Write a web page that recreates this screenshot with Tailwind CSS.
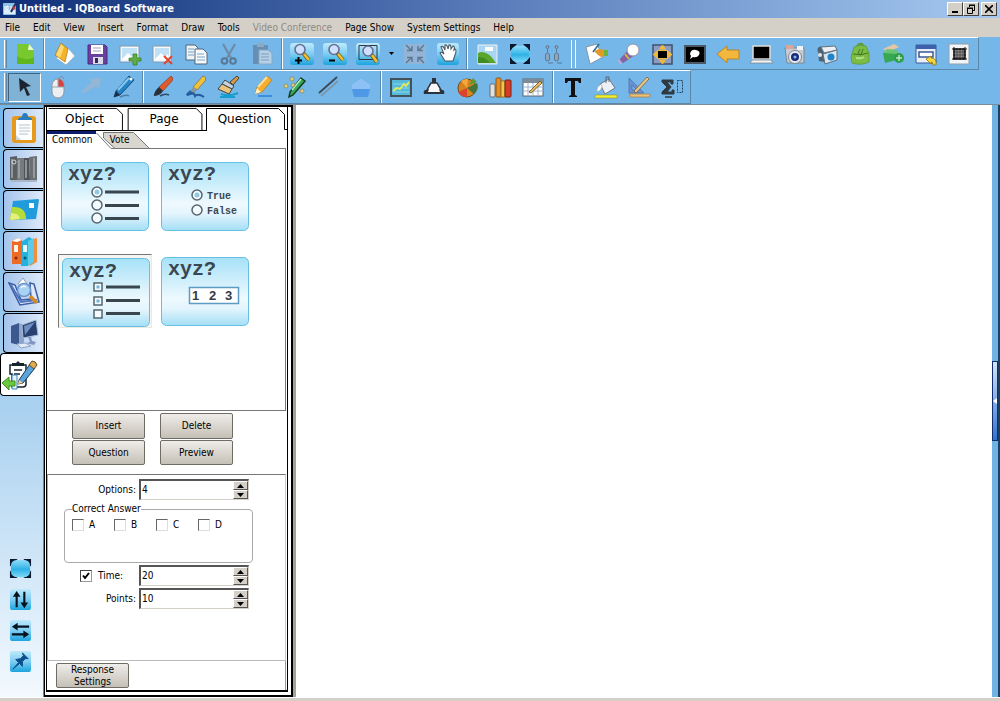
<!DOCTYPE html>
<html lang="en">
<head>
  <meta charset="UTF-8" />
  <meta name="viewport" content="width=device-width, initial-scale=1.0" />
  <title>Untitled - IQBoard Software</title>
  <script src="https://cdn.jsdelivr.net/npm/@tailwindcss/browser@4"></script>
</head>
<body class="h-screen flex flex-col overflow-hidden bg-[#74b7e8] text-black text-[10px] leading-3 font-['DejaVu_Sans_Condensed','DejaVu_Sans',sans-serif]">

  <!-- shared gradients -->
  <svg class="absolute w-0 h-0" aria-hidden="true">
    <defs>
      <linearGradient id="glass" x1="0" y1="0" x2="0" y2="1"><stop offset="0" stop-color="#bdeafc"/><stop offset=".5" stop-color="#7fcdf2"/><stop offset="1" stop-color="#1ba4de"/></linearGradient>
      <linearGradient id="ball" x1="0" y1="0" x2="0" y2="1"><stop offset="0" stop-color="#8fdcf8"/><stop offset=".55" stop-color="#2fb2e8"/><stop offset="1" stop-color="#7fd8f6"/></linearGradient>
      <linearGradient id="card" x1="0" y1="0" x2="0" y2="1"><stop offset="0" stop-color="#a6e1f8"/><stop offset=".6" stop-color="#eef9fe"/><stop offset=".75" stop-color="#e4f5fd"/><stop offset="1" stop-color="#a4def6"/></linearGradient>
    </defs>
  </svg>

  <header class="h-[18px] shrink-0 flex items-center pl-[3px] pr-[3px] bg-linear-to-r from-[#0f2e78] via-[#5b7dbb] to-[#a6caf0]">
    <svg class="size-[14px]" viewBox="0 0 14 14"><rect y="1" width="13" height="12" rx="1" fill="#8fc0e6"/><rect x="1" y="8" width="11" height="4" fill="#dbeefa"/><path d="M2 4v4M5 4a2 2 0 1 0 0 4V4M8 4v4" stroke="#fff" fill="none"/><path d="M8 10l5-9" stroke="#222b55" stroke-width="2"/><circle cx="11" cy="6" r="1.5" fill="#d33"/></svg>
    <h1 class="ml-[2px] text-[11px] font-bold text-white whitespace-nowrap">Untitled - IQBoard Software</h1>
    <div class="ml-auto flex">
      <button aria-label="Minimize" class="w-4 h-[14px] bg-[#d4d0c8] border border-t-white border-l-white border-r-[#404040] border-b-[#404040] flex items-end justify-center pb-[2px]"><span class="w-[6px] h-[2px] bg-black"></span></button>
      <button aria-label="Restore" class="w-4 h-[14px] bg-[#d4d0c8] border border-t-white border-l-white border-r-[#404040] border-b-[#404040] flex items-center justify-center"><svg class="size-[10px]" viewBox="0 0 10 10" fill="none" stroke="#000"><path d="M3 1h6M3 1.500h6M3.500 3V1M8.500 1v5.500H7M1 4h6M1 4.500h6M1.500 4v5.500h5V4"/></svg></button>
      <button aria-label="Close" class="ml-[2px] w-4 h-[14px] bg-[#d4d0c8] border border-t-white border-l-white border-r-[#404040] border-b-[#404040] flex items-center justify-center"><svg class="size-2" viewBox="0 0 8 8"><path d="M0 0l8 8M8 0L0 8" stroke="#000" stroke-width="1.600"/></svg></button>
    </div>
  </header>

  <nav class="h-[19px] shrink-0 flex items-center gap-[13px] pl-[5px] bg-[#d4d0c8] whitespace-nowrap">
    <button>File</button>
    <button>Edit</button>
    <button>View</button>
    <button>Insert</button>
    <button>Format</button>
    <button>Draw</button>
    <button>Tools</button>
    <button disabled class="text-[#8d8a84]">Video Conference</button>
    <button>Page Show</button>
    <button>System Settings</button>
    <button>Help</button>
  </nav>

  <!-- standard toolbar -->
  <div class="h-[33px] w-[979px] shrink-0 flex items-center border-t border-t-white border-b border-b-[#5b87a8] border-r border-r-[#5b87a8] pl-1">
    <span class="w-[3px] h-7 mr-px border-l border-l-white border-r border-r-[#5b87a8]"></span>
    <button aria-label="New" class="w-[33px] flex justify-center"><svg class="size-6" viewBox="0 0 24 24"><path d="M4 2h12l5 6v14H4z" fill="#79c92e"/><path d="M16 2l5 6h-6z" fill="#e9f7d8"/><path d="M4 14q9 6 17 1v7H4z" fill="#5fb61e"/></svg></button>
    <span class="w-[2px] h-full mx-[2px] border-l border-l-[#5b87a8] border-r border-r-white"></span>
    <button aria-label="Open" class="w-[33px] flex justify-center"><svg class="size-6" viewBox="0 0 24 24"><path d="M4 16l12-10 7 8-9 9z" fill="#fff" stroke="#8c9cab" stroke-width=".6"/><path d="M9 1l7 6-3 13-10-7z" fill="#f5b428" stroke="#a9771a" stroke-width=".7"/><path d="M9 2l3 3-4 11-4-3z" fill="#fbd975"/></svg></button>
    <button aria-label="Save" class="w-[33px] flex justify-center"><svg class="size-6" viewBox="0 0 24 24"><path d="M3 3h17l2 2v17H3z" fill="#6a3fa0" stroke="#4b2a7c"/><path d="M6 3h12v9H6z" fill="#fff"/><path d="M8 6h8M8 9h8" stroke="#a99bc2"/><path d="M8 15h10v7H8z" fill="#dcdce6"/><path d="M10 16h3v5h-3z" fill="#3b2466"/></svg></button>
    <button aria-label="Insert picture" class="w-[33px] flex justify-center"><svg class="size-6" viewBox="0 0 24 24"><path d="M2 4h19v16H2z" fill="#f4f8fb" stroke="#7d99ad"/><path d="M4 6h15v11H4z" fill="#bfe0f5"/><path d="M4 17l6-6 4 4 3-3 2 5z" fill="#fff"/><path d="M15 12h4v4h4v3h-4v4h-4v-4h-4v-3h4z" fill="#5fae43" stroke="#2f7a24" stroke-width=".7"/></svg></button>
    <button aria-label="Delete picture" class="w-[33px] flex justify-center"><svg class="size-6" viewBox="0 0 24 24"><path d="M2 4h18v16H2z" fill="#f4f8fb" stroke="#7d99ad"/><path d="M4 6h14v11H4z" fill="#bfe0f5"/><path d="M4 17l6-6 4 4 3-3 1 5z" fill="#fff"/><path d="M13 14l8 8M21 14l-8 8" stroke="#e2452c" stroke-width="2"/></svg></button>
    <button aria-label="Copy" class="w-[33px] flex justify-center"><svg class="size-6" viewBox="0 0 24 24"><path d="M2 3h9l3 3v12H2z" fill="#eef3f7" stroke="#51677a"/><path d="M4 7h6M4 10h6M4 13h6" stroke="#7ba2c6"/><path d="M11 7h8l4 4v11H11z" fill="#f6f9fb" stroke="#51677a"/><path d="M13 12h7M13 15h8M13 18h8" stroke="#7ba2c6"/></svg></button>
    <button aria-label="Cut" class="w-[33px] flex justify-center"><svg class="size-6" viewBox="0 0 24 24" fill="none"><path d="M6 2l8 14M18 2l-8 14" stroke="#6d8ba8" stroke-width="2.200"/><circle cx="7.500" cy="19" r="2.800" stroke="#587896" stroke-width="2"/><circle cx="16" cy="19" r="2.800" stroke="#587896" stroke-width="2"/></svg></button>
    <button aria-label="Paste" class="w-[33px] flex justify-center"><svg class="size-6" viewBox="0 0 24 24"><rect x="3" y="3" width="15" height="19" fill="#668fb3"/><rect x="7" y="1" width="7" height="4" fill="#8aa9c4"/><path d="M9 8h9l4 3v11H9z" fill="#b6d0e6" stroke="#87a8c6"/><path d="M11 12h8M11 15h8M11 18h8" stroke="#7c9fc0"/></svg></button>
    <span class="w-[2px] h-full ml-[3px] mr-[2px] border-l border-l-[#5b87a8] border-r border-r-white"></span>
    <button aria-label="Zoom in" class="w-[33px] flex justify-center"><svg class="size-6" viewBox="0 0 24 24"><rect x="0" y="1" width="24" height="22" rx="3" fill="url(#glass)"/><path d="M13 11l6 7" stroke="#7a5a10" stroke-width="4"/><path d="M14 12l5 6" stroke="#f0c030" stroke-width="2.500"/><circle cx="10" cy="7.500" r="5" fill="#cfe0ff" stroke="#656f92" stroke-width="1.600"/><path d="M5 18.500h7M8.500 15v7" stroke="#000" stroke-width="2"/></svg></button>
    <button aria-label="Zoom out" class="w-[33px] flex justify-center"><svg class="size-6" viewBox="0 0 24 24"><rect x="0" y="1" width="24" height="22" rx="3" fill="url(#glass)"/><path d="M14 11l6 7" stroke="#7a5a10" stroke-width="4"/><path d="M15 12l5 6" stroke="#f0c030" stroke-width="2.500"/><circle cx="11" cy="7.500" r="5" fill="#cfe0ff" stroke="#656f92" stroke-width="1.600"/><path d="M6 18.500h6" stroke="#000" stroke-width="2"/></svg></button>
    <button aria-label="Zoom region" class="w-[33px] flex justify-center"><svg class="size-6" viewBox="0 0 24 24"><rect x="0" y="1" width="24" height="22" rx="3" fill="url(#glass)"/><path d="M3 3.500h18v14H3z" fill="none" stroke="#334"/><path d="M15 12l6 8" stroke="#7a5a10" stroke-width="4"/><path d="M16 13l5 7" stroke="#f0c030" stroke-width="2.500"/><circle cx="12" cy="9" r="5" fill="#cfe0ff" stroke="#656f92" stroke-width="1.600"/></svg></button>
    <button aria-label="Zoom options" class="w-[14px] flex justify-center"><svg class="w-[5px] h-[3px]" viewBox="0 0 5 3"><path d="M0 0h5L2.500 3z"/></svg></button>
    <button aria-label="Fit" class="w-[33px] flex justify-center"><svg class="size-6" viewBox="0 0 24 24"><rect x="1" y="2" width="22" height="20" rx="3" fill="#93b4d6"/><path d="M3 3l5 5M21 3l-5 5M3 21l5-5M21 21l-5-5M4 8.500h5V4M20 8.500h-5V4M4 15.500h5V20M20 15.500h-5V20" fill="none" stroke="#5e7893" stroke-width="1.500"/></svg></button>
    <button aria-label="Pan" class="w-[33px] flex justify-center"><svg class="size-6" viewBox="0 0 24 24"><rect x="1" y="1" width="22" height="22" rx="3" fill="url(#glass)"/><path d="M9 19l-5-8q1-2 4 1L5 5q2-2 4 3V3q2-1 3 4l1-4q2-1 2 4l2-3q2 0 1 4l1-1q2 1 0 6l-2 6z" fill="#fff" stroke="#4d5964" stroke-width="1.100"/></svg></button>
    <span class="w-[2px] h-full mx-[2px] border-l border-l-[#5b87a8] border-r border-r-white"></span>
    <button aria-label="Background" class="w-[33px] flex justify-center"><svg class="size-6" viewBox="0 0 24 24"><path d="M3 3h19v19H3z" fill="#a8d6f2" stroke="#eee"/><path d="M3 11q9-4 18 10H3z" fill="#5ba62a"/><path d="M3 15q8 0 12 6H3z" fill="#3f8d20"/><path d="M10 5h8v4h-8z" fill="#fff"/></svg></button>
    <button aria-label="Full screen" class="w-[33px] flex justify-center"><svg class="size-6" viewBox="0 0 24 24"><path d="M2 2h7L2 9zM22 2v7l-7-7zM2 22v-7l7 7zM22 22h-7l7-7z" fill="#0c1830"/><rect x="3" y="4" width="18" height="16" rx="6" fill="url(#ball)"/></svg></button>
    <button aria-label="Dual users" class="w-[33px] flex justify-center"><svg class="size-6" viewBox="0 0 24 24" fill="#8fa6bd" stroke="#5d7892"><circle cx="6.500" cy="5" r="1.500"/><rect x="4.500" y="11" width="4" height="8" rx="2"/><circle cx="15.500" cy="5" r="1.500"/><rect x="13.500" y="11" width="4" height="8" rx="2"/><path d="M6.500 7v3M15.500 7v3M7 21h5M16 21h5" fill="none"/></svg></button>
    <span class="w-[5px] h-7 ml-[2px] mr-[3px] border-x border-x-white"></span>
    <button aria-label="Page note" class="w-[33px] flex justify-center"><svg class="size-6" viewBox="0 0 24 24"><path d="M2 5l11-3 6 13-13 7z" fill="#fff" stroke="#8796a4"/><path d="M15 2l-6 8" stroke="#246b9c" stroke-width="1.500"/><path d="M10 9l5-2 8 1v5l-6 2-3-2z" fill="#e0992a"/><path d="M20 8h4v6h-4z" fill="#69b53c"/></svg></button>
    <button aria-label="Spotlight" class="w-[33px] flex justify-center"><svg class="size-6" viewBox="0 0 24 24"><path d="M2 18l10-11 6 6-12 8z" fill="#8064a8"/><path d="M8 12l4 5" stroke="#d8b24a" stroke-width="2"/><ellipse cx="16" cy="8" rx="6" ry="6" fill="#fff" stroke="#9a91a8"/><path d="M1 17q3 0 4 5l-3 0z" fill="#bda8d4"/></svg></button>
    <button aria-label="Screen shade" class="w-[33px] flex justify-center"><svg class="size-6" viewBox="0 0 24 24"><rect x="3" y="3" width="19" height="19" fill="#8c9cc0" stroke="#40506b" stroke-width="1.500"/><path d="M12.500 3l3 4h-6zM12.500 22l3-4h-6zM3 12.500l4-3v6zM22 12.500l-4-3v6z" fill="#efb93b" stroke="#efb93b"/><rect x="7" y="8" width="11" height="9" fill="#efb93b"/><rect x="8" y="9" width="9" height="7"/></svg></button>
    <button aria-label="Screen note" class="w-[33px] flex justify-center"><svg class="size-6" viewBox="0 0 24 24"><rect x="2" y="4" width="20" height="17" stroke="#4b5866" stroke-width="2"/><path d="M7 12q1-5 6-4 5 1 3 5-2 3-6 2l-3 2 1-3z" fill="#fff"/></svg></button>
    <button aria-label="Back" class="w-[33px] flex justify-center"><svg class="size-6" viewBox="0 0 24 24"><path d="M1 12L11 4v4h12v9H11v4z" fill="#f2b73c" stroke="#b6852f"/></svg></button>
    <button aria-label="Desktop" class="w-[33px] flex justify-center"><svg class="size-6" viewBox="0 0 24 24"><path d="M4 4h17v13H4z" stroke="#ddd" stroke-width="1.500"/><path d="M3 18h19l2 3H1z" fill="#f3f3f3" stroke="#7b858e" stroke-width=".8"/></svg></button>
    <button aria-label="Camera" class="w-[33px] flex justify-center"><svg class="size-6" viewBox="0 0 24 24"><path d="M3 6h19v15H5z" fill="#c7ccd4" stroke="#7e8792"/><path d="M4 3h7l1 4H4z" fill="#dba79c"/><rect x="15" y="4" width="6" height="4" fill="#f0f2f4"/><circle cx="13" cy="15" r="6.500" fill="#e7ebef" stroke="#7c8795"/><circle cx="13" cy="15" r="4" fill="#1a2d78"/><circle cx="13" cy="15" r="1.500" fill="#8db3e8"/></svg></button>
    <button aria-label="Video" class="w-[33px] flex justify-center"><svg class="size-6" viewBox="0 0 24 24"><circle cx="6" cy="8" r="3.500" fill="#516275"/><path d="M6 5l14-1 2 4-13 3z" fill="#eef1f4" stroke="#60707e"/><path d="M3 11l12 0v10l-11-2z" fill="#4e6274"/><path d="M8 12l14-4v10l-12 4z" fill="#d9e5ef" stroke="#60707e"/><circle cx="16" cy="15" r="3.500" fill="#1e84cc"/><circle cx="5" cy="13" r="2" fill="#dce4ea"/></svg></button>
    <button aria-label="Toolkit" class="w-[33px] flex justify-center"><svg class="size-6" viewBox="0 0 24 24"><path d="M9 5q1-4 5-3l3 4" fill="none" stroke="#5d9b36" stroke-width="2"/><path d="M6 5q6-3 12-1l3 7v9q-8 4-17 1l-1-6z" fill="#7cbc45" stroke="#5d9b36" stroke-width=".8"/><path d="M5 12q8 2 15-1M12 7l-2 4 3 2 2-6" fill="none" stroke="#3f7a20"/><path d="M8 16q5 1 8-1" stroke="#b2e384" stroke-width="2" fill="none"/></svg></button>
    <button aria-label="Resources" class="w-[33px] flex justify-center"><svg class="size-6" viewBox="0 0 24 24"><path d="M2 7l11-5 5 3-11 5z" fill="#e3c7a5"/><path d="M2 11h15l2 6-15 4z" fill="#37a852"/><path d="M2 11l4-4 11 1v4z" fill="#69c476"/><circle cx="18" cy="16" r="5" fill="#2f9e48"/><path d="M18 13v6M15 16h6" stroke="#bde8c4" stroke-width="1.500"/></svg></button>
    <button aria-label="Switch window" class="w-[33px] flex justify-center"><svg class="size-6" viewBox="0 0 24 24"><path d="M2 3h20v18H2z" fill="#e9eef6" stroke="#3a5a9c"/><path d="M2 3h20v4H2z" fill="#3d62ab"/><path d="M5 10h14v5H5z" fill="#fff" stroke="#3a5a9c" stroke-width="1.500"/><path d="M12 17l5-3v2q6 0 5 7h-3q0-3-2-3v2z" fill="#f4d53a" stroke="#8f7613" stroke-width=".8"/></svg></button>
    <button aria-label="Select region" class="w-[33px] flex justify-center"><svg class="size-6" viewBox="0 0 24 24"><rect x="2" y="2" width="20" height="20" fill="#f2f4f6" stroke="#8fa0b0"/><rect x="7" y="7" width="11" height="10" fill="#8d8d8d" stroke="#111" stroke-width="1.500"/><path d="M5 7h15M5 17h15M7 5v14M18 5v14" stroke="#111" stroke-dasharray="2 1.500"/><path d="M8 10h9M8 13h9M8 15.500h9M10 8v8M13 8v8M16 8v8" stroke="#444" stroke-width=".8"/></svg></button>
  </div>

  <!-- drawing toolbar -->
  <div class="h-[34px] w-[691px] shrink-0 flex items-center border-t border-t-white border-b border-b-[#5b87a8] border-r border-r-[#5b87a8] pl-1">
    <span class="w-[3px] h-7 mr-px border-l border-l-white border-r border-r-[#5b87a8]"></span>
    <button aria-label="Select" aria-pressed="true" class="w-[33px] h-[29px] flex items-center justify-center bg-[#80b2d6] border border-t-[#3f6280] border-l-[#3f6280] border-b-white border-r-white"><svg class="size-6" viewBox="0 0 24 24"><path d="M6 3l12 8-5 1 4 8-3 1-3-8-4 4z" fill="#1d2430"/></svg></button>
    <button aria-label="Mouse" class="w-[33px] flex justify-center"><svg class="size-6" viewBox="0 0 24 24"><path d="M12 4q4-5 6 0" fill="none" stroke="#7b8fa6"/><rect x="6" y="4" width="12" height="19" rx="6" fill="#eceef2" stroke="#8d95a4"/><path d="M12 4q6 0 6 8h-6z" fill="#d8433f"/><path d="M6 12h12M12 4v8" stroke="#9aa"/></svg></button>
    <button aria-label="Laser" class="w-[33px] flex justify-center"><svg class="size-6" viewBox="0 0 24 24"><path d="M2 17L13 7l-3-3 12-1-2 11-3-3L5 18z" fill="#94b6d4"/></svg></button>
    <button aria-label="Pen" class="w-[33px] flex justify-center"><svg class="size-6" viewBox="0 0 24 24"><path d="M2 22l2-6L17 1l5 4L8 20z" fill="#2583c8" stroke="#1b4a77"/><path d="M6 15L17 3" stroke="#86cbf1" stroke-width="2"/><path d="M2 22l2-6 4 4z" fill="#1c2f45"/><path d="M8 22q6-3 9-1" fill="none" stroke="#4f7ea4" stroke-width="1.500"/><circle cx="19" cy="4" r="1.500" fill="#fff"/></svg></button>
    <span class="w-[2px] h-full mx-[2px] border-l border-l-[#5b87a8] border-r border-r-white"></span>
    <button aria-label="Brush" class="w-[33px] flex justify-center"><svg class="size-6" viewBox="0 0 24 24"><path d="M20 1q3 2 1 5l-9 10-4-4z" fill="#df5b2e" stroke="#8f3820" stroke-width=".7"/><path d="M8 12l4 4q-2 4-8 5-2 0-1-1 1-5 5-8z" fill="#2b3037"/><path d="M9 21q5-3 9-1" fill="none" stroke="#2f4b66" stroke-width="1.500"/></svg></button>
    <button aria-label="Paint brush" class="w-[33px] flex justify-center"><svg class="size-6" viewBox="0 0 24 24"><path d="M19 1q4 1 2 5l-8 9-4-3z" fill="#f0c23a" stroke="#80683a" stroke-width=".7"/><path d="M9 12l4 3-3 4-4-2z" fill="#8796a4"/><path d="M6 15l4 4-7 2-1-2z" fill="#2c66a7"/><path d="M3 20q7-4 8 1 3-3 9 1" fill="none" stroke="#245a9a" stroke-width="2"/></svg></button>
    <button aria-label="Wide brush" class="w-[33px] flex justify-center"><svg class="size-6" viewBox="0 0 24 24"><path d="M20 1l2 2-6 7-3-3z" fill="#d89a45" stroke="#4d4130"/><path d="M8 5l9 6-2 3-10-5z" fill="#c8d2da" stroke="#2b4a58"/><path d="M5 9l10 5-3 5-11-5z" fill="#e8c682" stroke="#4d4130"/><path d="M4 19q8 3 17-1M3 22h15" fill="none" stroke="#169ed0" stroke-width="2"/></svg></button>
    <button aria-label="Highlighter" class="w-[33px] flex justify-center"><svg class="size-6" viewBox="0 0 24 24"><path d="M5 19l2-7L17 1l5 4-10 12z" fill="#f5ae2e" stroke="#b27a21" stroke-width=".7"/><path d="M8 12L17 2" stroke="#fde09a" stroke-width="2"/><path d="M5 19l2-6 4 4z" fill="#fff0c8"/><path d="M8 21h14" stroke="#3c8fde" stroke-width="2"/></svg></button>
    <button aria-label="Magic pen" class="w-[33px] flex justify-center"><svg class="size-6" viewBox="0 0 24 24"><path d="M6 22l1-5L18 3l4 3L10 20z" fill="#3aa856" stroke="#153f25" stroke-width="1.500"/><path d="M9 15L18 4" stroke="#b3f0bd" stroke-width="1.500"/><g fill="#e0d07c" stroke="#857842" stroke-width=".6"><circle cx="3" cy="11" r="2"/><circle cx="9" cy="4" r="2"/><circle cx="10" cy="10" r="1.800"/><circle cx="19" cy="16" r="2"/></g></svg></button>
    <button aria-label="Line" class="w-[33px] flex justify-center"><svg class="size-6" viewBox="0 0 24 24"><path d="M3 18L21 2" stroke="#3c4a55" stroke-width="1.800"/><path d="M5 21L22 6" stroke="#7e8f9c" stroke-width="1.600"/></svg></button>
    <button aria-label="Shape" class="w-[33px] flex justify-center"><svg class="size-6" viewBox="0 0 24 24"><path d="M12 3l10 7-3 12H5L2 10z" fill="#4f98e6"/><path d="M12 3l10 7-1 4H3l-1-4z" fill="#8dc0f4"/></svg></button>
    <span class="w-[2px] h-full ml-[3px] mr-[2px] border-l border-l-[#5b87a8] border-r border-r-white"></span>
    <button aria-label="Function graph" class="w-[33px] flex justify-center"><svg class="size-6" viewBox="0 0 24 24"><rect x="2" y="4" width="20" height="17" fill="#57b9d9" stroke="#43515a" stroke-width="2"/><path d="M4 9h16M4 13h16M4 17h16" stroke="#88d7e8"/><path d="M4 16l4-3 3 1 4-5 2 2 3-4" fill="none" stroke="#e3ee57" stroke-width="1.800"/></svg></button>
    <button aria-label="Solid" class="w-[33px] flex justify-center"><svg class="size-6" viewBox="0 0 24 24"><path d="M10 3h4v5h-4z" fill="#2a333b"/><path d="M9 8h6l4 7H5z" fill="#f8f8f8" stroke="#2a333b" stroke-width="1.500"/><path d="M3 15h18q2 1 1 4H2q-1-3 1-4z" fill="#2a333b"/><path d="M7 14h10l1 3H6z" fill="#f8f8f8"/></svg></button>
    <button aria-label="Pie chart" class="w-[33px] flex justify-center"><svg class="size-6" viewBox="0 0 24 24"><circle cx="12" cy="13" r="9" fill="#d8831d" stroke="#6c4a16"/><path d="M12 13l-6-7a9 9 0 0 1 7-2z" fill="#f2a83a"/><path d="M12 13L22 8a9 9 0 0 1-3 11z" fill="#467436"/><path d="M12 13l-9 4a9 9 0 0 0 9 5z" fill="#d9442a"/><path d="M14 10l4-7 4 4z" fill="#5a9a35"/></svg></button>
    <button aria-label="Bar chart" class="w-[33px] flex justify-center"><svg class="size-6" viewBox="0 0 24 24"><rect x="2" y="9" width="5" height="13" rx="1" fill="#e4e1dc" stroke="#6b6b70"/><rect x="8" y="3" width="5" height="19" rx="1" fill="#e98c22" stroke="#8f5716"/><rect x="13" y="6" width="4" height="16" fill="#f3c744" stroke="#987523"/><rect x="17" y="5" width="6" height="17" rx="1" fill="#d53d27" stroke="#7d2318"/></svg></button>
    <button aria-label="Table" class="w-[33px] flex justify-center"><svg class="size-6" viewBox="0 0 24 24"><rect x="2" y="4" width="20" height="17" fill="#fff" stroke="#5b6670"/><path d="M2 4h20v4H2z" fill="#7d8a97"/><path d="M2 12h20M2 16h20M7 8v13M12 8v13M17 8v13" stroke="#9fb4cc"/><path d="M8 17L19 6l2 2-11 10z" fill="#e5bb5e" stroke="#5f4c25" stroke-width=".8"/></svg></button>
    <span class="w-[2px] h-full ml-[3px] mr-[2px] border-l border-l-[#5b87a8] border-r border-r-white"></span>
    <button aria-label="Text" class="w-[33px] flex justify-center"><svg class="size-6" viewBox="0 0 24 24"><path d="M4 3h16v5h-2l-1-2h-3v14l2 1v1H8v-1l2-1V6H7L6 8H4z" fill="#111"/></svg></button>
    <button aria-label="Fill" class="w-[33px] flex justify-center"><svg class="size-6" viewBox="0 0 24 24"><path d="M6 9l9-5 6 9-10 6z" fill="#edf1f5" stroke="#6b7884"/><path d="M7 9q-5 3-4 8 4-1 5-5z" fill="#fff" stroke="#8fa4b4" stroke-width=".6"/><path d="M12 8V2h3v5" fill="none" stroke="#59646e"/><path d="M1 20h22v3H1z" fill="#f1ef2e" stroke="#8d9131" stroke-width=".6"/></svg></button>
    <button aria-label="Drawing tools" class="w-[33px] flex justify-center"><svg class="size-6" viewBox="0 0 24 24"><path d="M2 3l15 15H2zM5 10v5h5z" fill="#6b8fd0" fill-rule="evenodd" stroke="#4563a0" stroke-width=".6"/><path d="M7 16L20 2l2 2L9 18z" fill="#e9c68a" stroke="#77603c" stroke-width=".8"/><path d="M3 19h20v3H3z" fill="#efbf77" stroke="#a47c42" stroke-width=".7"/></svg></button>
    <button aria-label="Formula" class="w-[33px] flex justify-center"><svg class="size-6" viewBox="0 0 24 24"><path d="M2 5h11v4h-2V7H7l4 5-4 5h5v-2h2v4H2v-2l5-5-5-5z" fill="#2f3a42" stroke="#2f3a42"/><path d="M17.500 5.500h5v12h-5z" fill="none" stroke="#23465f" stroke-dasharray="2 1"/><path d="M5 22h7" stroke="#2f3a42" stroke-width="1.500"/></svg></button>
  </div>

  <main class="flex-1 min-h-0 flex bg-white border-t border-t-[#7c8b98]">
    <!-- side tabs -->
    <aside class="w-[43px] shrink-0 flex flex-col bg-linear-to-b from-[#74b7e8] from-0% via-[#a8d0ef] via-50% to-[#f3f9fe] to-100%">
      <div class="pt-[3px] flex flex-col items-end gap-px">
        <button aria-label="Clipboard" class="w-10 h-10 flex items-center justify-center rounded-l-sm border border-r-0 border-black bg-linear-to-r from-[#a5c4ec] to-[#dde9f9]"><svg class="size-8" viewBox="0 0 32 32"><rect x="4" y="4" width="24" height="27" rx="3" fill="#e69a1d"/><path d="M8 8h16v20H8z" fill="#fdfdfd"/><path d="M8 23l5 5H8z" fill="#cfd8df"/><path d="M10 8q0-3 4-3 0-4 3-4t3 4q4 0 4 3z" fill="#2a7cc0"/><path d="M11 13h11M11 16h11M11 19h11M11 22h9" stroke="#b8c4ce"/></svg></button>
        <button aria-label="Library" class="w-10 h-10 flex items-center justify-center rounded-l-sm border border-r-0 border-black bg-linear-to-r from-[#a5c4ec] to-[#dde9f9]"><svg class="size-8" viewBox="0 0 32 32"><path d="M2 4l7-1v24H2z" fill="#5a5f64"/><path d="M9 5h7v22H9z" fill="#767b80"/><path d="M16 5h5l1 22h-6z" fill="#505458"/><path d="M21 4l8-1v24h-7z" fill="#6a6f74"/><path d="M4 6v19M11 7v18M18 7v18M26 5v20" stroke="#a5a9ad" stroke-width="1.500"/><circle cx="6" cy="9" r="2" fill="none" stroke="#d4d6d8"/><path d="M3 28h26" stroke="#a8b6c6" stroke-width="2"/></svg></button>
        <button aria-label="Gallery" class="w-10 h-10 flex items-center justify-center rounded-l-sm border border-r-0 border-black bg-linear-to-r from-[#a5c4ec] to-[#dde9f9]"><svg class="size-8" viewBox="0 0 32 32"><path d="M5 7l25-2q1 0 1 1l-3 19-25 1q-1 0-1-1z" fill="#209cdc"/><path d="M4 13q14-1 14 12l-15 1-1-1z" fill="#b3dc3a"/><path d="M3 19q8 0 9 6l-9 1-1-1z" fill="#e7ef7c"/><path d="M21 9h5v5h-5z" fill="#fff"/></svg></button>
        <button aria-label="Folders" class="w-10 h-10 flex items-center justify-center rounded-l-sm border border-r-0 border-black bg-linear-to-r from-[#a5c4ec] to-[#dde9f9]"><svg class="size-8" viewBox="0 0 32 32"><path d="M4 6l6-3 4 2v24H4z" fill="#ee6b26"/><path d="M22 5l7-2v24l-7 4z" fill="#f0903c"/><path d="M13 7l8-5 5 3v22l-6 4h-7z" fill="#26b0dc"/><path d="M20 6l6-3v24l-6 4z" fill="#5ccbe9"/><path d="M4 6l6-3 4 2-5 2z" fill="#fff"/><rect x="6" y="10" width="4" height="7" fill="#fff3e6"/><rect x="15" y="10" width="4" height="7" fill="#e6f9ff"/><circle cx="8" cy="23" r="1.500" fill="#7c2c0c"/><circle cx="17" cy="23" r="1.500" fill="#06506e"/></svg></button>
        <button aria-label="Search" class="w-10 h-10 flex items-center justify-center rounded-l-sm border border-r-0 border-black bg-linear-to-r from-[#a5c4ec] to-[#dde9f9]"><svg class="size-8" viewBox="0 0 32 32"><path d="M1 7l6 2 6 15 10-1-1-16 4 1 5 18-19 3z" fill="#dfeafa" stroke="#3a5ca5" stroke-width="1.500"/><path d="M3 9l10 17 16-2" fill="none" stroke="#4f73bd" stroke-width="2"/><path d="M10 8l5-6 4 6" fill="#fff" stroke="#8799b5"/><circle cx="16" cy="14" r="6.500" fill="#a5d2f4" fill-opacity=".9" stroke="#6f94cc" stroke-width="1.500"/><path d="M13 12q2-3 5-1" fill="none" stroke="#fff" stroke-width="1.500"/><path d="M22 20l7 7" stroke="#d58b2c" stroke-width="3.500"/></svg></button>
        <button aria-label="Computer" class="w-10 h-10 flex items-center justify-center rounded-l-sm border border-r-0 border-black bg-linear-to-r from-[#a5c4ec] to-[#dde9f9]"><svg class="size-8" viewBox="0 0 32 32"><path d="M3 9l8-3v22l-8-2z" fill="#3d588c"/><path d="M11 6l5 2v19l-5 1z" fill="#8ea5cb"/><path d="M14 8l14-5 2 15-15 3z" fill="#27406f" stroke="#a8b9d6"/><path d="M16 9l11-4-10 13z" fill="#6e8ec4"/><path d="M20 20l2 5-4 1 8 2 2-3-4-1-1-4z" fill="#7f97c0"/><path d="M9 27l8-1 6 3-10 2z" fill="#e2eaf5" stroke="#8ea5cb"/></svg></button>
      </div>
      <button aria-label="Question" aria-pressed="true" class="w-full h-[43px] pl-px flex items-center rounded-l-sm border border-r-0 border-black bg-white"><svg class="size-9" viewBox="0 0 36 36"><path d="M8 8h16v19q0 3-3 3H10V17H8z" fill="#fff" stroke="#16232f" stroke-width="1.500"/><path d="M10 6h4l2-2 2 2h4v3H10z" fill="#16232f"/><path d="M12 13h8M12 17h6" stroke="#16232f" stroke-width="1.500"/><path d="M17 23L28 7l5 4-12 15-5 1z" fill="#5aa4dc" stroke="#1e3a58"/><path d="M27 8l3-4q4 0 5 4l-3 4z" fill="#e0aa50" stroke="#5b4a2c"/><path d="M17 23l4 3-5 1z" fill="#f4d38c"/><path d="M10 18h5v14h-5z" fill="#e4f1fb" stroke="#3f85b8"/><path d="M0 26l7-6v4h6v5H7v4z" fill="#6cc93f" stroke="#3b8e1e"/></svg></button>
      <div class="mt-auto mb-6 pr-[3px] flex flex-col items-center gap-2">
        <button aria-label="Full screen"><svg class="size-[23px]" viewBox="0 0 24 24"><path d="M1 2h8L1 10zM23 2v8l-8-8zM1 22v-8l8 8zM23 22h-8l8-8z" fill="#0c1830"/><rect x="2" y="3" width="20" height="18" rx="6" fill="url(#ball)"/></svg></button>
        <button aria-label="Move vertically"><svg class="size-[23px]" viewBox="0 0 24 24"><rect x="1" y="1" width="22" height="22" rx="3" fill="url(#glass)"/><path d="M8 20V7M16 4v13" stroke="#06121e" stroke-width="2.200"/><path d="M4 9l4-6 4 6zM12 15l4 6 4-6z" fill="#06121e"/></svg></button>
        <button aria-label="Move horizontally"><svg class="size-[23px]" viewBox="0 0 24 24"><rect x="1" y="1" width="22" height="22" rx="3" fill="url(#glass)"/><path d="M5 8h16M3 16h16" stroke="#06121e" stroke-width="2.200"/><path d="M9 4L3 8l6 4zM15 12l6 4-6 4z" fill="#06121e"/></svg></button>
        <button aria-label="Pin"><svg class="size-[23px]" viewBox="0 0 24 24"><rect x="1" y="1" width="22" height="22" rx="3" fill="url(#glass)"/><path d="M4 20l6-7-3-3 5-1 3-3-1-3 6 6-3 0-3 3v5l-3-3z" fill="#0b4f8c" stroke="#0b4f8c"/></svg></button>
      </div>
    </aside>

    <!-- question panel -->
    <section class="w-[253px] shrink-0 flex bg-[#a5a29c] border-l border-l-[#808080] pr-[3px]">
      <div class="flex-1 flex bg-white border-2 border-l border-black pb-[3px] pr-[3px] pl-px">
        <div class="flex-1 flex flex-col border-l border-b-2 border-r border-black">
          <div role="tablist" class="h-[24px] shrink-0 flex text-[12px] font-['DejaVu_Sans',sans-serif]">
            <button role="tab" class="relative w-[79px] pr-1 border-b border-black"><svg class="absolute inset-0 size-full" viewBox="0 0 79 24" fill="none" stroke="#000"><path d="M0 1.500h71l6 6V24"/></svg>Object</button>
            <button role="tab" class="relative w-[80px] pr-1 border-b border-black"><svg class="absolute inset-0 size-full" viewBox="0 0 80 24" fill="none" stroke="#000"><path d="M.5 24V1.500h71l6 6V24"/></svg>Page</button>
            <button role="tab" aria-selected="true" class="relative flex-1 pr-1"><svg class="absolute inset-0 size-full" viewBox="0 0 81 24" fill="none" stroke="#000"><path d="M.5 24V1.500h72l6 6V22.500H81"/></svg>Question</button>
          </div>
          <div class="h-[18px] shrink-0 mr-px relative flex items-center text-[10px]">
            <svg class="absolute left-0 top-0 w-[110px] h-[18px]" viewBox="0 0 110 18"><path d="M56.500 1.500h30l16 16H68L56.500 7z" fill="#d9d6cf" stroke="#777"/><path d="M0 1h50l15 16.500H0z" fill="#fff"/><path d="M0 1.500h49" stroke="#0c1c6c" stroke-width="3"/><path d="M49.500 2L64 17.500" stroke="#777"/></svg>
            <span class="absolute left-[64px] right-0 bottom-0 border-t border-t-[#777]"></span>
            <button class="relative ml-[5px]">Common</button>
            <button class="relative ml-[17px]">Vote</button>
          </div>
          <div class="h-[262px] shrink-0 mr-px pl-[11px] pt-[10px] border-r border-b border-[#777] grid grid-cols-[100px_100px] auto-rows-[95px] content-start">
            <button aria-label="Single choice" class="w-[94px] h-[75px] flex items-center justify-center"><svg class="w-[88px] h-[69px]" viewBox="0 0 88 69"><rect x=".5" y=".5" width="87" height="68" rx="5" fill="url(#card)" stroke="#65bfe0"/><text x="7" y="18" font-size="20" font-weight="bold" font-family="Liberation Mono, monospace" fill="#3a4650">xyz?</text><g fill="#f4fbfe" stroke="#56656f" stroke-width="1.500"><circle cx="36" cy="30" r="5"/><circle cx="36" cy="43" r="5"/><circle cx="36" cy="56" r="5"/></g><circle cx="36" cy="30" r="2.500" fill="#8fc9e8"/><path d="M44 30h34M44 43.500h34M44 56.500h34" stroke="#39464e" stroke-width="3"/></svg></button>
            <button aria-label="True or false" class="w-[94px] h-[75px] flex items-center justify-center"><svg class="w-[88px] h-[69px]" viewBox="0 0 88 69"><rect x=".5" y=".5" width="87" height="68" rx="5" fill="url(#card)" stroke="#65bfe0"/><text x="7" y="18" font-size="20" font-weight="bold" font-family="Liberation Mono, monospace" fill="#3a4650">xyz?</text><g fill="#f4fbfe" stroke="#56656f" stroke-width="1.500"><circle cx="36" cy="33" r="5"/><circle cx="36" cy="48" r="5"/></g><circle cx="36" cy="33" r="2.500" fill="#8fc9e8"/><g font-size="10" font-weight="bold" font-family="Liberation Mono, monospace" fill="#3a4650"><text x="46" y="37">True</text><text x="46" y="52">False</text></g></svg></button>
            <button aria-label="Multiple choice" aria-pressed="true" class="w-[94px] h-[74px] flex items-center justify-center pl-[2px] pt-[2px] border-t border-l border-t-[#777] border-l-[#777] border-r border-b border-r-[#ece9e2] border-b-[#ece9e2] bg-[#f7f5f2]"><svg class="w-[88px] h-[69px]" viewBox="0 0 88 69"><rect x=".5" y=".5" width="87" height="68" rx="5" fill="url(#card)" stroke="#65bfe0"/><text x="7" y="19" font-size="20" font-weight="bold" font-family="Liberation Mono, monospace" fill="#3a4650">xyz?</text><g fill="#f4fbfe" stroke="#56656f" stroke-width="1.500"><path d="M32 25h8v8h-8zM32 39h8v8h-8zM32 52h8v8h-8z"/></g><path d="M34.500 27.500h3v3h-3zM34.500 41.500h3v3h-3z" fill="#6db4da"/><path d="M44 29h34M44 42.500h34M44 55.500h34" stroke="#39464e" stroke-width="3"/></svg></button>
            <button aria-label="Numeric answer" class="w-[94px] h-[75px] flex items-center justify-center"><svg class="w-[88px] h-[69px]" viewBox="0 0 88 69"><rect x=".5" y=".5" width="87" height="68" rx="5" fill="url(#card)" stroke="#65bfe0"/><text x="7" y="18" font-size="20" font-weight="bold" font-family="Liberation Mono, monospace" fill="#3a4650">xyz?</text><path d="M28.500 30.500h49v16h-49z" fill="#fff" stroke="#5b9cc4" stroke-width="1.500"/><g font-size="13" font-weight="bold" font-family="Liberation Sans, sans-serif" fill="#333b44"><text x="31" y="43">1</text><text x="48" y="43">2</text><text x="64" y="43">3</text></g></svg></button>
          </div>

          <div class="shrink-0 pt-[2px] pl-[25px] grid grid-cols-[73px_73px] gap-x-[15px] gap-y-px">
            <button class="h-[26px] rounded-[2px] border border-[#6f6c66] bg-linear-to-b from-[#efedea] to-[#c5c0b6]">Insert</button>
            <button class="h-[26px] rounded-[2px] border border-[#6f6c66] bg-linear-to-b from-[#efedea] to-[#c5c0b6]">Delete</button>
            <button class="h-[25px] rounded-[2px] border border-[#6f6c66] bg-linear-to-b from-[#efedea] to-[#c5c0b6]">Question</button>
            <button class="h-[25px] rounded-[2px] border border-[#6f6c66] bg-linear-to-b from-[#efedea] to-[#c5c0b6]">Preview</button>
          </div>

          <form class="flex-1 mt-[9px] mr-px flex flex-col border-t border-t-[#777] border-l border-l-[#aaa] border-r border-r-[#ccc] border-b border-b-[#bbb] pt-1" onsubmit="return false">
            <div class="flex items-center">
              <label for="options" class="w-[89px] pr-px text-right">Options:</label>
              <div class="w-[110px] h-[21px] ml-[2px] flex border-2 border-t-[#555] border-l-[#555] border-b border-r border-b-[#d4d0c8] border-r-[#d4d0c8]">
                <input id="options" type="text" value="4" class="w-0 flex-1 pl-px pb-px outline-none" />
                <span class="w-[15px] flex flex-col">
                  <button type="button" aria-label="More options" class="flex-1 flex items-center justify-center bg-[#d4d0c8] border border-t-white border-l-white border-r-[#555] border-b-[#555]"><svg class="w-[7px] h-1" viewBox="0 0 7 4"><path d="M0 4h7L3.500 0z"/></svg></button>
                  <button type="button" aria-label="Fewer options" class="flex-1 flex items-center justify-center bg-[#d4d0c8] border border-t-white border-l-white border-r-[#555] border-b-[#555]"><svg class="w-[7px] h-1" viewBox="0 0 7 4"><path d="M0 0h7L3.500 4z"/></svg></button>
                </span>
              </div>
            </div>

            <fieldset class="w-[189px] h-[60px] mt-[3px] ml-[16px] pl-[7px] border border-[#aaa] rounded-[4px]">
              <legend class="h-3">Correct Answer</legend>
              <div class="flex pt-1">
                <label class="w-[42px] flex items-center gap-[5px]"><input type="checkbox" class="appearance-none size-[12px] bg-white border border-t-[#666] border-l-[#666] border-b-[#ddd] border-r-[#ddd]" />A</label>
                <label class="w-[42px] flex items-center gap-[5px]"><input type="checkbox" class="appearance-none size-[12px] bg-white border border-t-[#666] border-l-[#666] border-b-[#ddd] border-r-[#ddd]" />B</label>
                <label class="w-[42px] flex items-center gap-[5px]"><input type="checkbox" class="appearance-none size-[12px] bg-white border border-t-[#666] border-l-[#666] border-b-[#ddd] border-r-[#ddd]" />C</label>
                <label class="w-[42px] flex items-center gap-[5px]"><input type="checkbox" class="appearance-none size-[12px] bg-white border border-t-[#666] border-l-[#666] border-b-[#ddd] border-r-[#ddd]" />D</label>
              </div>
            </fieldset>

            <div class="flex items-center mt-[2px]">
              <label class="w-[89px] pl-[32px] flex items-center gap-[6px]">
                <span class="relative flex"><input type="checkbox" checked class="peer appearance-none size-[12px] bg-white border border-t-[#444] border-l-[#444] border-b-[#999] border-r-[#999]" /><svg class="absolute inset-0 size-[12px] hidden peer-checked:block pointer-events-none" viewBox="0 0 12 12"><path d="M3 5.500l2 2.500 4-5" fill="none" stroke="#000" stroke-width="2"/></svg></span>Time:</label>
              <div class="w-[110px] h-[21px] ml-[2px] flex border-2 border-t-[#555] border-l-[#555] border-b border-r border-b-[#d4d0c8] border-r-[#d4d0c8]">
                <input aria-label="Time" type="text" value="20" class="w-0 flex-1 pl-px pb-px outline-none" />
                <span class="w-[15px] flex flex-col">
                  <button type="button" aria-label="More time" class="flex-1 flex items-center justify-center bg-[#d4d0c8] border border-t-white border-l-white border-r-[#555] border-b-[#555]"><svg class="w-[7px] h-1" viewBox="0 0 7 4"><path d="M0 4h7L3.500 0z"/></svg></button>
                  <button type="button" aria-label="Less time" class="flex-1 flex items-center justify-center bg-[#d4d0c8] border border-t-white border-l-white border-r-[#555] border-b-[#555]"><svg class="w-[7px] h-1" viewBox="0 0 7 4"><path d="M0 0h7L3.500 4z"/></svg></button>
                </span>
              </div>
            </div>

            <div class="flex items-center mt-[2px]">
              <label for="points" class="w-[89px] pr-px text-right">Points:</label>
              <div class="w-[110px] h-[21px] ml-[2px] flex border-2 border-t-[#555] border-l-[#555] border-b border-r border-b-[#d4d0c8] border-r-[#d4d0c8]">
                <input id="points" type="text" value="10" class="w-0 flex-1 pl-px pb-px outline-none" />
                <span class="w-[15px] flex flex-col">
                  <button type="button" aria-label="More points" class="flex-1 flex items-center justify-center bg-[#d4d0c8] border border-t-white border-l-white border-r-[#555] border-b-[#555]"><svg class="w-[7px] h-1" viewBox="0 0 7 4"><path d="M0 4h7L3.500 0z"/></svg></button>
                  <button type="button" aria-label="Fewer points" class="flex-1 flex items-center justify-center bg-[#d4d0c8] border border-t-white border-l-white border-r-[#555] border-b-[#555]"><svg class="w-[7px] h-1" viewBox="0 0 7 4"><path d="M0 0h7L3.500 4z"/></svg></button>
                </span>
              </div>
            </div>
          </form>

          <div class="h-[29px] shrink-0 mr-px pl-[9px] pt-[2px] border-r border-r-[#999]">
            <button class="w-[73px] h-[25px] rounded-[2px] border border-[#6f6c66] bg-linear-to-b from-[#efedea] to-[#c5c0b6] leading-3">Response<br>Settings</button>
          </div>
        </div>
      </div>
    </section>

    <!-- drawing page -->
    <div class="flex-1 bg-white"></div>
    <div class="w-2 shrink-0 flex flex-col justify-center bg-[#6fb3e3] border-r-2 border-r-[#1d3f63]">
      <button aria-label="Show panel" class="h-20 flex items-center justify-center border border-[#0f2f70] bg-linear-to-b from-[#d5e3f8] to-[#2f74cf]"><svg class="w-1 h-[6px]" viewBox="0 0 4 6"><path d="M4 0v6L0 3z" fill="#fff"/></svg></button>
    </div>
  </main>

  <footer class="h-1 shrink-0 bg-[#d4d0c8] border-t border-t-white"></footer>
</body>
</html>
